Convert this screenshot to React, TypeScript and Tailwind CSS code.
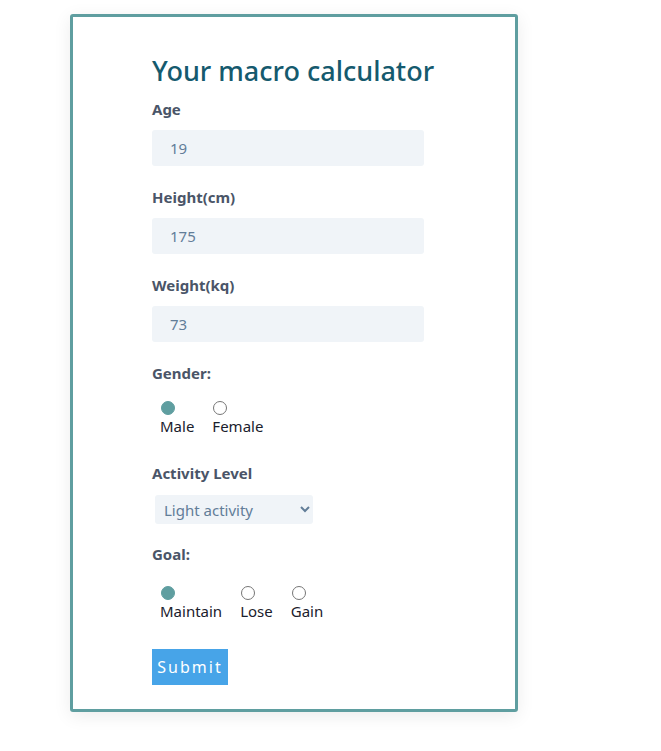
import { useState } from 'react';

const font = { fontFamily: '"Noto Sans", "Open Sans", sans-serif' };

const Field = ({ label, value }: { label: string; value: string }) => (
  <div className="mb-[20px]">
    <label className="block text-[15px] font-bold text-[#4a5568] leading-[22px] mb-[10px]">{label}</label>
    <input
      defaultValue={value}
      className="block w-[272px] h-[36px] bg-[#f0f4f8] rounded-[3px] px-[18px] text-[15px] text-[#627d98] outline-none"
    />
  </div>
);

const Radio = ({ name, label, checked, onChange }: { name: string; label: string; checked: boolean; onChange: () => void }) => (
  <label className="inline-block mr-[18px] text-[15px] text-[#1a202c] leading-[18px]">
    <input
      type="radio"
      name={name}
      checked={checked}
      onChange={onChange}
      className="appearance-none block w-[14px] h-[14px] ml-[1px] rounded-full border border-[#767676] checked:bg-[#5f9ea0] checked:border-[#5f9ea0]"
    />
    <span className="block mt-[2px]">{label}</span>
  </label>
);

export default function App() {
  const [gender, setGender] = useState('male');
  const [goal, setGoal] = useState('maintain');

  return (
    <div className="min-h-screen bg-white pt-[14px] pl-[70px]" style={font}>
      <div className="w-[448px] h-[698px] border-[3px] border-[#5f9ea0] rounded-[3px] shadow-[0_4px_18px_rgba(0,0,0,0.08)] pl-[79px] pt-[36px]">
        <h1 className="text-[27px] font-medium text-[#155a6e] leading-[36px] mb-[9px]">Your macro calculator</h1>
        <Field label="Age" value="19" />
        <Field label="Height(cm)" value="175" />
        <Field label="Weight(kq)" value="73" />

        <label className="block text-[15px] font-bold text-[#4a5568] leading-[22px] mb-[17px]">Gender:</label>
        <div className="ml-[8px] mb-[24px]">
          <Radio name="gender" label="Male" checked={gender === 'male'} onChange={() => setGender('male')} />
          <Radio name="gender" label="Female" checked={gender === 'female'} onChange={() => setGender('female')} />
        </div>

        <label className="block text-[15px] font-bold text-[#4a5568] leading-[22px] mb-[11px]">Activity Level</label>
        <select
          defaultValue="light"
          className="block ml-[3px] w-[158px] h-[29px] bg-[#f0f4f8] rounded-[3px] pl-[5px] text-[15px] text-[#627d98] outline-none mb-[19px]"
        >
          <option value="sedentary">Sedentary</option>
          <option value="light">Light activity</option>
          <option value="moderate">Moderate activity</option>
          <option value="very">Very active</option>
        </select>

        <label className="block text-[15px] font-bold text-[#4a5568] leading-[22px] mb-[21px]">Goal:</label>
        <div className="ml-[8px] mb-[26px]">
          <Radio name="goal" label="Maintain" checked={goal === 'maintain'} onChange={() => setGoal('maintain')} />
          <Radio name="goal" label="Lose" checked={goal === 'lose'} onChange={() => setGoal('lose')} />
          <Radio name="goal" label="Gain" checked={goal === 'gain'} onChange={() => setGoal('gain')} />
        </div>

        <button className="block w-[76px] h-[36px] bg-[#47a4e8] text-white text-[16px] tracking-[2px]">Submit</button>
      </div>
    </div>
  );
}
